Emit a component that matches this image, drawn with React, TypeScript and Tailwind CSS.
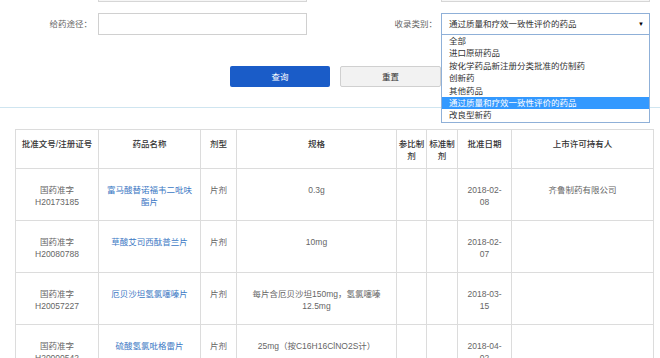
import React from "react";

const font = "font-['Liberation_Sans','Noto_Sans_CJK_SC',sans-serif]";

const options = [
  "全部",
  "进口原研药品",
  "按化学药品新注册分类批准的仿制药",
  "创新药",
  "其他药品",
  "通过质量和疗效一致性评价的药品",
  "改良型新药",
];

type Row = {
  no: string;
  name: React.ReactNode;
  form: string;
  spec: React.ReactNode;
  date: React.ReactNode;
  holder: string;
};

const rows: Row[] = [
  {
    no: "H20173185",
    name: (
      <>
        富马酸替诺福韦二吡呋
        <br />
        酯片
      </>
    ),
    form: "片剂",
    spec: "0.3g",
    date: (
      <>
        2018-02-
        <br />
        08
      </>
    ),
    holder: "齐鲁制药有限公司",
  },
  {
    no: "H20080788",
    name: "草酸艾司西酞普兰片",
    form: "片剂",
    spec: "10mg",
    date: (
      <>
        2018-02-
        <br />
        07
      </>
    ),
    holder: "",
  },
  {
    no: "H20057227",
    name: "厄贝沙坦氢氯噻嗪片",
    form: "片剂",
    spec: (
      <>
        每片含厄贝沙坦150mg，氢氯噻嗪
        <br />
        12.5mg
      </>
    ),
    date: (
      <>
        2018-03-
        <br />
        15
      </>
    ),
    holder: "",
  },
  {
    no: "H20000542",
    name: "硫酸氢氯吡格雷片",
    form: "片剂",
    spec: "25mg（按C16H16ClNO2S计）",
    date: (
      <>
        2018-04-
        <br />
        02
      </>
    ),
    holder: "",
  },
];

const th = "border border-[#dcdcdc] align-top pt-[8px] font-medium text-[#333] whitespace-nowrap";
const cell = "border border-[#dcdcdc] align-top pt-[15px] whitespace-nowrap";
const td = `${cell} text-[#666]`;
const link = `${cell} text-[#3b78c4]`;

export default function App() {
  return (
    <div className={`relative w-[660px] h-[358px] overflow-hidden bg-white text-[8.5px] leading-[12px] ${font}`}>
      {/* bottom edge of the previous form row */}
      <div className="flex h-[2px]">
        <div className="ml-[98px] w-[209px] border-x border-b border-[#d6d6d6] bg-[#f6f6f6]" />
        <div className="ml-[134px] w-[209px] border-x border-b border-[#d6d6d6] bg-[#f6f6f6]" />
      </div>

      <div className="mt-[11px] flex h-[22px] items-center">
        <div className="w-[92px] text-right text-[#666]">给药途径：</div>
        <input className="ml-[6px] h-[22px] w-[209px] border border-[#d0d0d0] bg-white" />
        <div className="w-[130px] text-right text-[#666]">收录类别：</div>
        <div className="relative ml-[4px] h-[22px] w-[209px]">
          <div className="flex h-full items-center justify-between border border-[#8fb0d8] bg-white pl-[7px] pr-[5px] text-[#333]">
            <span>通过质量和疗效一致性评价的药品</span>
            <span className="text-[6px] text-black">▼</span>
          </div>
          <div className="absolute left-0 top-[21px] z-10 w-[209px] border border-[#8fb0d8] bg-white text-[#333]">
            {options.map((o, i) => (
              <div
                key={o}
                className={`h-[12.4px] pl-[7px] leading-[12.4px] ${i === 5 ? "bg-[#3399ff] text-white" : ""}`}
              >
                {o}
              </div>
            ))}
          </div>
        </div>
      </div>

      <div className="mt-[31px] flex gap-[10px] pl-[230px]">
        <button className="h-[21px] w-[100px] rounded-[2px] bg-[#1a5cc8] text-white">查询</button>
        <button className="h-[21px] w-[101px] rounded-[2px] border border-[#d0d0d0] bg-[#f2f2f2] text-[#333]">
          重置
        </button>
      </div>

      <div className="mt-[20px] h-px bg-[#cfe5f0]" />

      <table className="ml-[15px] mt-[21px] w-[638px] table-fixed border-collapse text-center">
        <colgroup>
          <col className="w-[83px]" />
          <col className="w-[102px]" />
          <col className="w-[36px]" />
          <col className="w-[160px]" />
          <col className="w-[30px]" />
          <col className="w-[31px]" />
          <col className="w-[54px]" />
          <col className="w-[142px]" />
        </colgroup>
        <thead>
          <tr className="h-[39px]">
            <th className={th}>批准文号/注册证号</th>
            <th className={th}>药品名称</th>
            <th className={th}>剂型</th>
            <th className={th}>规格</th>
            <th className={th}>
              参比制
              <br />剂
            </th>
            <th className={th}>
              标准制
              <br />剂
            </th>
            <th className={th}>批准日期</th>
            <th className={th}>上市许可持有人</th>
          </tr>
        </thead>
        <tbody>
          {rows.map((r) => (
            <tr key={r.no} className="h-[52px]">
              <td className={td}>
                国药准字
                <br />
                {r.no}
              </td>
              <td className={link}>{r.name}</td>
              <td className={td}>{r.form}</td>
              <td className={td}>{r.spec}</td>
              <td className={td} />
              <td className={td} />
              <td className={td}>{r.date}</td>
              <td className={td}>{r.holder}</td>
            </tr>
          ))}
        </tbody>
      </table>
    </div>
  );
}
